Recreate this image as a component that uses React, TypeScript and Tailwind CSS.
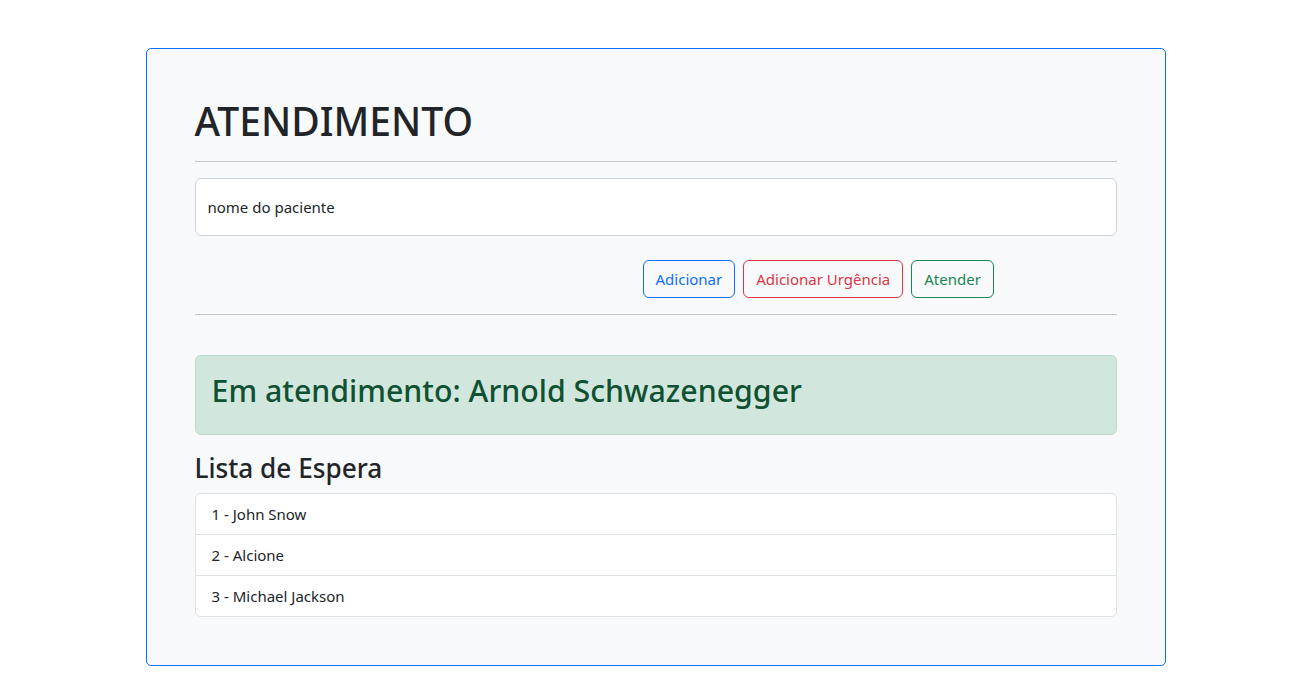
import React from "react";

const espera = ["John Snow", "Alcione", "Michael Jackson"];

export default function App() {
  return (
    <div className="min-h-screen bg-white pt-12 text-[#212529]" style={{ fontFamily: '"Noto Sans", sans-serif' }}>
      <div className="mx-auto w-[1020px] rounded-[5px] border border-[#0d6efd] bg-[#f8f9fa] p-12">
        <h1 className="mb-2 text-[39px] font-medium leading-[48px]">ATENDIMENTO</h1>
        <hr className="my-4 border-t border-[#c8c9cb]" />

        {/* campo do paciente */}
        <div className="flex h-[58px] items-center rounded-[6px] border border-[#ced4da] bg-white px-3 text-[15px]">
          nome do paciente
        </div>

        <div className="mt-6 ml-[448px] flex gap-2">
          <button className="h-[38px] rounded-[6px] border border-[#0d6efd] px-3 text-[15px] text-[#0d6efd]">
            Adicionar
          </button>
          <button className="h-[38px] rounded-[6px] border border-[#dc3545] px-3 text-[15px] text-[#dc3545]">
            Adicionar Urgência
          </button>
          <button className="h-[38px] rounded-[6px] border border-[#198754] px-3 text-[15px] text-[#198754]">
            Atender
          </button>
        </div>
        <hr className="my-4 border-t border-[#c8c9cb]" />

        <div className="mt-10 mb-4 rounded-[6px] border border-[#badbcc] bg-[#d1e7dd] p-4 text-[#0f5132]">
          <h2 className="mb-2 text-[30.3px] font-medium leading-[38px]">Em atendimento: Arnold Schwazenegger</h2>
        </div>

        <h3 className="mb-2 text-[26.2px] font-medium leading-[34px]">Lista de Espera</h3>
        <ul className="overflow-hidden rounded-[6px] border border-[#dee2e6] bg-white">
          {espera.map((nome, i) => (
            <li
              key={nome}
              className="border-b border-[#dee2e6] px-4 py-2 text-[15px] leading-6 last:border-b-0"
            >
              {i + 1} - {nome}
            </li>
          ))}
        </ul>
      </div>
    </div>
  );
}
